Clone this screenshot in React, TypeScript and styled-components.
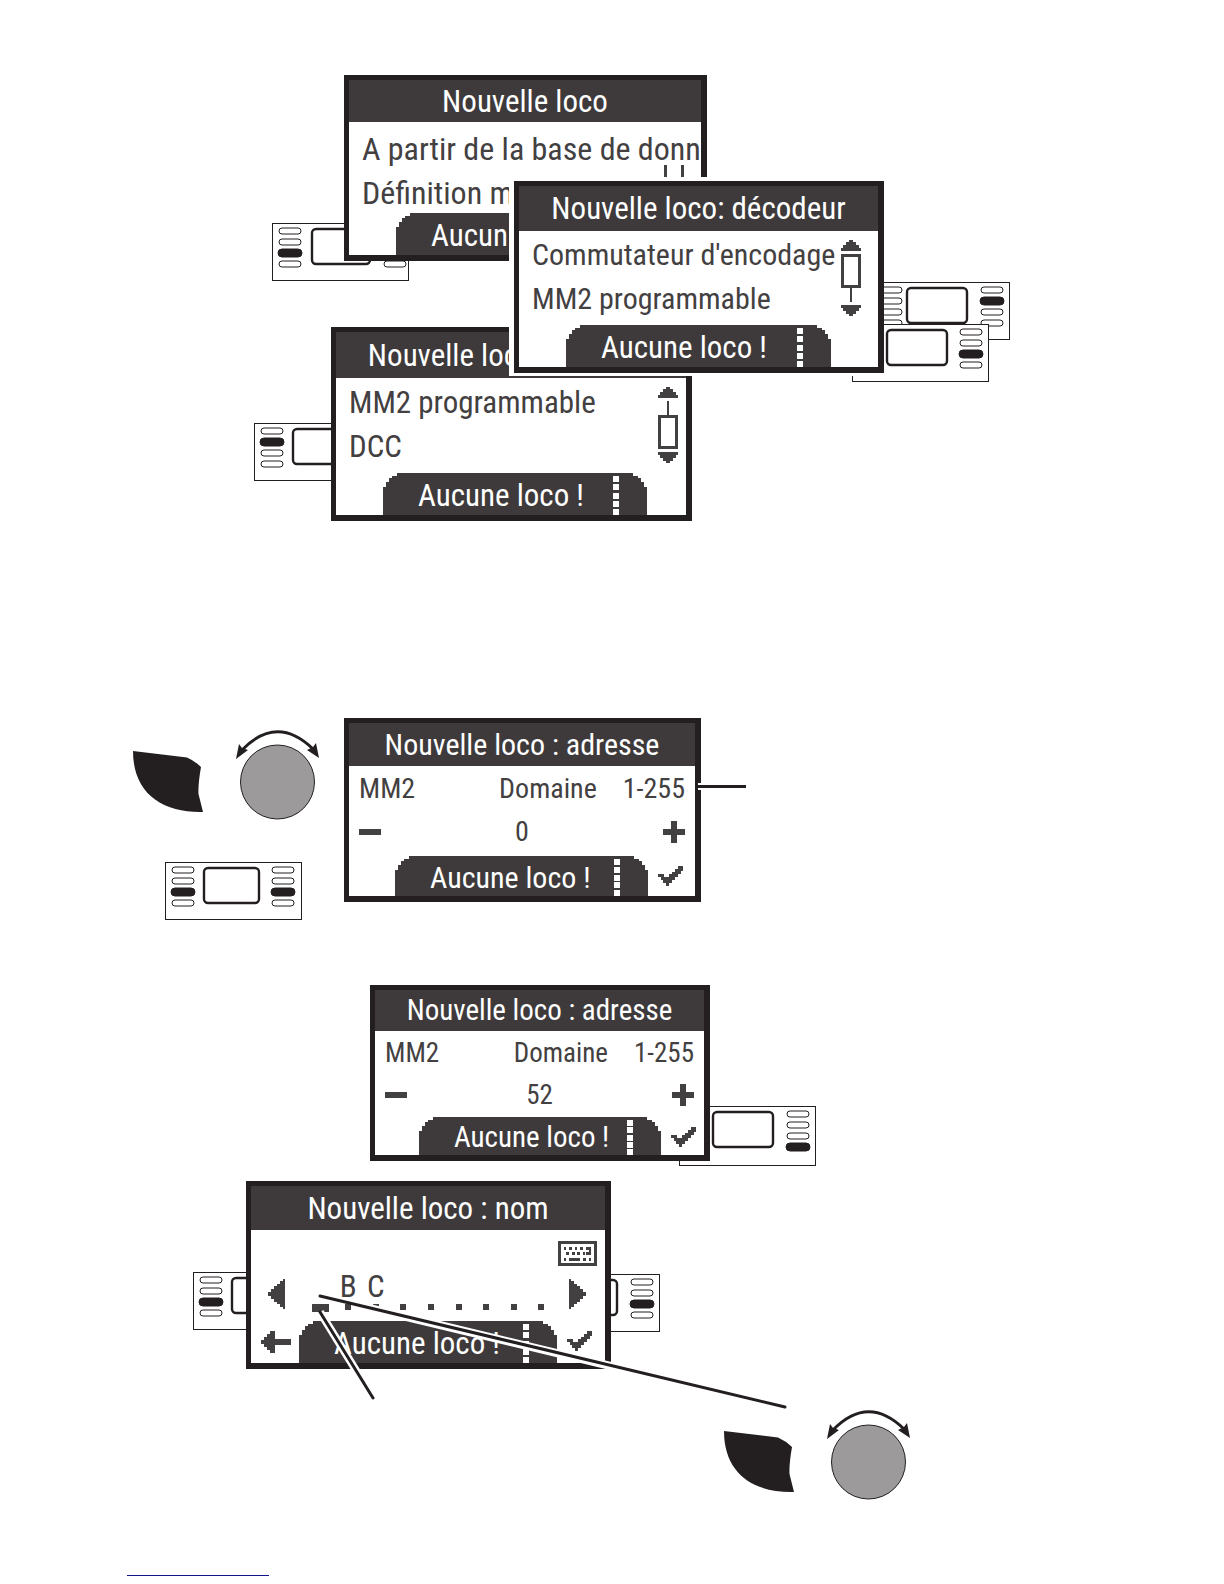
import React from 'react';
import styled, { createGlobalStyle } from 'styled-components';

const INK = '#231f20';
const PANEL = '#3e3a3b';
const PIXEL = '#434041';

const GlobalStyle = createGlobalStyle`
  *, *::before, *::after { box-sizing: border-box; }
  body {
    margin: 0;
    background: #fff;
    font-family: "Roboto Condensed", "Liberation Sans Narrow", Lato, sans-serif;
  }
`;

const Page = styled.main`
  max-width: 1224px;
  margin: 0 auto;
  padding: 75px 0 8px;
  display: flex;
  flex-direction: column;
`;

/* A free canvas on which the overlapping windows and keypads are pinned. */
const Canvas = styled.section<{ $height: number; $gap: number }>`
  position: relative;
  height: ${p => p.$height}px;
  margin-bottom: ${p => p.$gap}px;
`;

const Pin = styled.div<{ $x: number; $y: number; $halo?: boolean }>`
  position: absolute;
  left: ${p => p.$x}px;
  top: ${p => p.$y}px;
  line-height: 0;
  ${p => (p.$halo ? 'box-shadow: -5px 3px 0 #fff, -5px -4px 0 #fff;' : '')}
`;

const FigureRow = styled.section`
  display: flex;
  align-items: flex-start;
  padding-left: 133px;
  margin-bottom: 65px;
`;

const ControlColumn = styled.div`
  width: 211px;
  padding-top: 10px;
  display: flex;
  flex-direction: column;
  gap: 45px;
`;

const KeypadSlot = styled.div`
  padding-left: 32px;
  line-height: 0;
`;

const Callout = styled.span`
  width: 48px;
  height: 3px;
  margin: 67px 0 0 -3px;
  background: ${INK};
  box-shadow: 0 0 0 2px #fff;
  clip-path: inset(-2px 0 -2px 0);
`;

const Rule = styled.hr`
  width: 142px;
  height: 1px;
  margin: 0 0 0 127px;
  border: 0;
  background: #14148a;
`;

/* ---------- LCD window ---------- */

const Lcd = styled.article<{ $w: number; $h: number; $size: number }>`
  width: ${p => p.$w}px;
  height: ${p => p.$h}px;
  display: flex;
  flex-direction: column;
  border: 5px solid ${INK};
  border-right-width: 6px;
  border-bottom-width: 6px;
  background: #fff;
  color: ${PIXEL};
  font-size: ${p => p.$size}px;
  line-height: 1;
  white-space: pre;
  overflow: hidden;
`;

const Title = styled.h2<{ $h: number; $indent: number }>`
  flex: none;
  height: ${p => p.$h}px;
  margin: 0;
  padding-left: ${p => p.$indent}px;
  display: flex;
  align-items: center;
  justify-content: center;
  background: ${PANEL};
  color: #fff;
  font-size: inherit;
  font-weight: 400;
`;

const Body = styled.div`
  flex: 1;
  min-height: 0;
  display: flex;
  justify-content: space-between;
`;

const List = styled.ul<{ $size: number; $top: number }>`
  flex: 1;
  min-width: 0;
  margin: 0;
  padding: ${p => p.$top}px 0 0 13px;
  list-style: none;
  font-size: ${p => p.$size}px;
`;

const Item = styled.li`
  height: 44px;
  display: flex;
  align-items: center;
`;

const ScrollSlot = styled.div<{ $right: number }>`
  width: 20px;
  margin-right: ${p => p.$right}px;
  padding-top: 9px;
  line-height: 0;
`;

const Address = styled.div<{ $size: number }>`
  flex: 1;
  padding: 1px 10px 0;
  font-size: ${p => p.$size}px;
`;

const AddressRow = styled.div<{ $h: number }>`
  height: ${p => p.$h}px;
  display: flex;
  align-items: center;
  justify-content: space-between;
`;

const Range = styled.span`
  display: flex;
  gap: 26px;
`;

const IconButton = styled.button`
  display: flex;
  padding: 0;
  border: 0;
  background: none;
  color: inherit;
`;

const Footer = styled.footer<{ $left: number; $tab: number; $h: number }>`
  flex: none;
  height: ${p => p.$h}px;
  display: grid;
  grid-template-columns: ${p => p.$left}px ${p => p.$tab}px 1fr;
`;

const FooterSlot = styled.div`
  padding: 10px 0 0 10px;
`;

const Tab = styled.div`
  display: flex;
  align-items: center;
  justify-content: space-between;
  padding: 3px 28px 0 35px;
  background: ${PANEL};
  color: #fff;
  clip-path: polygon(
    0 14px, 3px 14px, 3px 9px, 6px 9px, 6px 5px, 9px 5px, 9px 3px, 14px 3px, 14px 0,
    calc(100% - 14px) 0, calc(100% - 14px) 3px, calc(100% - 9px) 3px, calc(100% - 9px) 5px,
    calc(100% - 6px) 5px, calc(100% - 6px) 9px, calc(100% - 3px) 9px, calc(100% - 3px) 14px,
    100% 14px, 100% 100%, 0 100%
  );
`;

const Dashes = styled.span`
  height: 100%;
  display: flex;
  flex-direction: column;
  justify-content: space-between;
`;

const Dash = styled.i`
  width: 6px;
  height: 6px;
  background: #fff;
`;

/* ---------- Name entry ---------- */

const NameEntry = styled.div`
  flex: 1;
  display: flex;
  flex-direction: column;
`;

const KeyboardRow = styled.div`
  height: 40px;
  padding: 11px 8px 0 0;
  display: flex;
  justify-content: flex-end;
  align-items: flex-start;
`;

const EntryRow = styled.div`
  display: flex;
  align-items: center;
  justify-content: space-between;
  padding: 0 19px 0 17px;
`;

const Slots = styled.div`
  width: 248px;
  margin-left: 8px;
  display: grid;
  grid-template-columns: repeat(9, 1fr);
`;

const Slot = styled.span<{ $active?: boolean }>`
  height: 48px;
  padding-top: 1px;
  display: flex;
  flex-direction: column;
  align-items: center;
  &::after {
    content: "";
    width: ${p => (p.$active ? 17 : 6)}px;
    height: ${p => (p.$active ? 8 : 6)}px;
    margin-top: auto;
    margin-bottom: ${p => (p.$active ? 6 : 8)}px;
    background: ${PIXEL};
  }
`;

/* ---------- Drawings ---------- */

const Glyph = styled.svg`
  display: block;
  overflow: visible;
  fill: currentColor;
  shape-rendering: crispEdges;
`;

const Sketch = styled.svg`
  display: block;
  overflow: visible;
`;

const Minus = () => (
  <Glyph width="22" height="6" aria-hidden="true"><rect width="22" height="6" /></Glyph>
);

const Plus = () => (
  <Glyph width="22" height="22" aria-hidden="true">
    <path d="M8 0h6v8h8v6h-8v8H8v-8H0V8h8z" />
  </Glyph>
);

const Check = () => (
  <Glyph width="25" height="20" aria-hidden="true">
    <path d="M20 0h5v5h-2v3h-3v3h-3v3h-3v3h-3v3H8v-3H5v-3H3v-3H0V8h6v3h5V8h3V6h3V3h3z" />
  </Glyph>
);

const BackArrow = () => (
  <Glyph width="30" height="22" aria-hidden="true">
    <path d="M9 0h5v8h16v6H14v8H9v-3H6v-3H3v-3H0V9h3V6h3V3h3z" />
  </Glyph>
);

const Triangle = ({ flip }: { flip?: boolean }) => (
  <Glyph width="17" height="30" viewBox="0 0 17 30" aria-hidden="true">
    <path
      transform={flip ? 'translate(17 0) scale(-1 1)' : undefined}
      d="M15 0H17V30H15V28H12V25H9V23H6V20H3V17H0V13H3V10H6V7H9V5H12V2H15Z"
    />
  </Glyph>
);

const Keyboard = () => (
  <Glyph width="39" height="25" aria-hidden="true">
    <path fillRule="evenodd" d="M0 0h39v25H0zM3 3v19h33V3z" />
    <path d="M6 6h2v3H6zM11 6h3v3h-3zM17 6h2v3h-2zM22 6h3v3h-3zM28 6h5v8h-2V9h-3zM8 11h3v3H8zM14 11h3v3h-3zM19 11h3v3h-3zM25 11h2v3h-2zM28 11h3v3h-3zM6 17h2v3H6zM11 17h11v3H11zM25 17h3v3h-3zM31 17h2v3h-2z" />
  </Glyph>
);

type ScrollAt = 'top' | 'bottom' | 'behind';

/* "behind" leaves only the thumb's two sides, for a window that is mostly covered. */
const Scroll = ({ at }: { at: ScrollAt }) => (
  <Glyph width="20" height="76" viewBox="0 0 20 76" aria-hidden="true">
    {at === 'behind' && <path d="M0 34h3v24H0zM17 34h3v24h-3z" />}
    {at !== 'behind' && <path d="M8 0h4v2h3v3h3v3h2v3H0V8h2V5h3V2h3z" />}
    {at === 'top' && <path fillRule="evenodd" d="M0 14h20v34h-9v14H9V48H0zM3 17v28h14V17z" />}
    {at === 'bottom' && <path fillRule="evenodd" d="M9 14h2v14h9v34H0V28h9zM3 31v28h14V31z" />}
    {at !== 'behind' && <path d="M0 65h20v3h-2v3h-3v3h-3v2H8v-2H5v-3H2v-3H0z" />}
  </Glyph>
);

const PILL_ROWS = [8, 19, 30, 41];

type KeypadProps = {
  left?: number;
  right?: number;
  screenX?: number;
  screenW?: number;
  rightX?: number;
  height?: number;
};

const Keypad = ({ left, right, screenX = 38, screenW = 57, rightX = 107, height = 58 }: KeypadProps) => {
  const pill = (x: number, y: number, row: number, on?: number) => (
    <rect
      key={`${x}-${row}`}
      x={on === row ? x - 1 : x}
      y={on === row ? y - 4 : y - 3}
      width={on === row ? 24 : 22}
      height={on === row ? 8 : 6}
      rx={on === row ? 4 : 3}
      fill={on === row ? INK : '#fff'}
    />
  );
  return (
    <Sketch width="137" height={height} viewBox={`0 0 137 ${height}`} stroke={INK} strokeWidth="1" aria-hidden="true">
      <rect x=".5" y=".5" width="136" height={height - 1} fill="#fff" />
      {PILL_ROWS.map((y, i) => pill(7, y, i, left))}
      {PILL_ROWS.map((y, i) => pill(rightX, y, i, right))}
      <rect x={screenX + 1} y="6" width={screenW - 2} height="35" rx="4" fill="#fff" strokeWidth="2.4" />
    </Sketch>
  );
};

const Knob = () => (
  <Sketch width="188" height="89" viewBox="0 0 188 89" aria-hidden="true">
    <path d="M0 23 L54 29.500 Q62 33 68 39 Q65 56 65.500 66 L70 84 C30 85 0 66 0 23z" fill={INK} />
    <circle cx="144.500" cy="54" r="37" fill="#9c9a9b" stroke={INK} strokeWidth="1" />
    <path d="M109 22 Q144 -14 180 21" fill="none" stroke={INK} strokeWidth="3" />
    <path d="M103 31 L106 16 L109 20 L115 22z M186 30 L183 15 L180 19 L174 22z" fill={INK} />
  </Sketch>
);

/* ---------- Composed parts ---------- */

type LcdProps = {
  w: number;
  h: number;
  title: string;
  head: number;
  indent?: number;
  tabLeft: number;
  tab: number;
  foot?: number;
  size?: number;
  back?: boolean;
  confirm?: boolean;
  children: React.ReactNode;
};

const LcdWindow = ({ w, h, title, head, indent = 0, tabLeft, tab, foot = 42, size = 31, back, confirm, children }: LcdProps) => (
  <Lcd $w={w} $h={h} $size={size}>
    <Title $h={head} $indent={indent}>{title}</Title>
    <Body>{children}</Body>
    <Footer $left={tabLeft} $tab={tab} $h={foot}>
      <FooterSlot>{back && <IconButton aria-label="Retour"><BackArrow /></IconButton>}</FooterSlot>
      <Tab>
        <span>Aucune loco !</span>
        <Dashes>{[0, 1, 2, 3, 4].map(i => <Dash key={i} />)}</Dashes>
      </Tab>
      <FooterSlot>{confirm && <IconButton aria-label="Valider"><Check /></IconButton>}</FooterSlot>
    </Footer>
  </Lcd>
);

type ListProps = { items: string[]; at: ScrollAt; right?: number; size?: number; top?: number };

const ListBody = ({ items, at, right = 17, size = 31, top = 2 }: ListProps) => (
  <>
    <List $size={size} $top={top}>{items.map(t => <Item key={t}>{t}</Item>)}</List>
    <ScrollSlot $right={right}><Scroll at={at} /></ScrollSlot>
  </>
);

const AddressBody = ({ value, row, size }: { value: string; row: number; size: number }) => (
  <Address $size={size}>
    <AddressRow $h={row}>
      <span>MM2</span>
      <Range><span>Domaine</span><span>1-255</span></Range>
    </AddressRow>
    <AddressRow $h={row}>
      <IconButton aria-label="Diminuer"><Minus /></IconButton>
      <span>{value}</span>
      <IconButton aria-label="Augmenter"><Plus /></IconButton>
    </AddressRow>
  </Address>
);

const LETTERS = ['', 'B', 'C', '', '', '', '', '', ''];

export default function App() {
  return (
    <>
      <GlobalStyle />
      <Page>
        <Canvas $height={446} $gap={197}>
          <Pin $x={272} $y={148}><Keypad left={2} screenX={39} screenW={60} rightX={112} /></Pin>
          <Pin $x={344} $y={0}>
            <LcdWindow w={363} h={186} title="Nouvelle loco" head={42} tabLeft={47} tab={265}>
              <ListBody items={['A partir de la base de donn', 'Définition ma']} at="behind" size={32} top={5} />
            </LcdWindow>
          </Pin>
          <Pin $x={254} $y={348}><Keypad left={1} /></Pin>
          <Pin $x={331} $y={252}>
            <LcdWindow w={361} h={194} title="Nouvelle loco: décodeur" head={46} indent={8} tabLeft={47} tab={264}>
              <ListBody items={['MM2 programmable', 'DCC']} at="bottom" right={8} />
            </LcdWindow>
          </Pin>
          <Pin $x={873} $y={207}><Keypad right={1} screenX={33} screenW={62} rightX={108} /></Pin>
          <Pin $x={852} $y={249}><Keypad right={2} screenX={34} screenW={62} rightX={108} /></Pin>
          <Pin $x={514} $y={106} $halo>
            <LcdWindow w={370} h={192} title="Nouvelle loco: décodeur" head={45} tabLeft={47} tab={265}>
              <ListBody items={["Commutateur d'encodage", 'MM2 programmable']} at="top" size={30} />
            </LcdWindow>
          </Pin>
        </Canvas>

        <FigureRow>
          <ControlColumn>
            <Knob />
            <KeypadSlot><Keypad left={2} right={2} /></KeypadSlot>
          </ControlColumn>
          <LcdWindow w={357} h={184} title="Nouvelle loco : adresse" head={43} tabLeft={46} tab={253} foot={40} size={30} confirm>
            <AddressBody value="0" row={43} size={28} />
          </LcdWindow>
          <Callout />
        </FigureRow>

        <Canvas $height={181} $gap={15}>
          <Pin $x={679} $y={121}><Keypad right={3} screenX={33} screenW={62} rightX={108} height={60} /></Pin>
          <Pin $x={370} $y={0}>
            <LcdWindow w={340} h={176} title="Nouvelle loco : adresse" head={41} tabLeft={44} tab={242} foot={38} size={29} confirm>
              <AddressBody value="52" row={42} size={27} />
            </LcdWindow>
          </Pin>
        </Canvas>

        <Canvas $height={318} $gap={76}>
          <Pin $x={193} $y={91}><Keypad left={2} /></Pin>
          <Pin $x={523} $y={93}><Keypad right={2} rightX={108} /></Pin>
          <Pin $x={246} $y={0}>
            <LcdWindow w={365} h={188} title="Nouvelle loco : nom" head={44} tabLeft={48} tab={258} back confirm>
              <NameEntry>
                <KeyboardRow><IconButton aria-label="Clavier"><Keyboard /></IconButton></KeyboardRow>
                <EntryRow>
                  <IconButton aria-label="Caractère précédent"><Triangle /></IconButton>
                  <Slots>
                    {LETTERS.map((c, i) => <Slot key={i} $active={i === 0}>{c}</Slot>)}
                  </Slots>
                  <IconButton aria-label="Caractère suivant"><Triangle flip /></IconButton>
                </EntryRow>
              </NameEntry>
            </LcdWindow>
          </Pin>
          <Pin $x={319} $y={114}>
            <Sketch width="467" height="114" viewBox="0 0 467 114" fill="none" strokeLinecap="round" aria-hidden="true">
              <path d="M1 17 L54 103 M50 13 L300 73" stroke="#fff" strokeWidth="8" strokeLinecap="butt" />
              <path d="M1 17 L54 103 M1 1 L466 112" stroke={INK} strokeWidth="3" />
            </Sketch>
          </Pin>
          <Pin $x={724} $y={227}><Knob /></Pin>
        </Canvas>

        <Rule />
      </Page>
    </>
  );
}
